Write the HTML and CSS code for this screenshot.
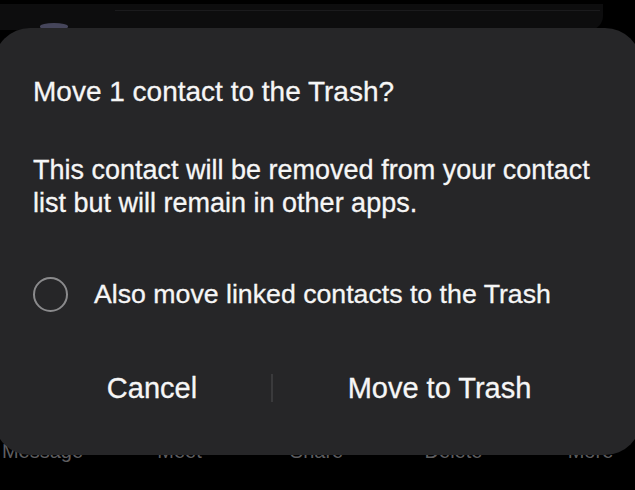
FILE: index.html
```html
<!DOCTYPE html>
<html lang="en">
<head>
<meta charset="utf-8">
<title>Move to Trash</title>
<link rel="stylesheet" href="styles.css">
</head>
<body>
<div class="app">
  <header class="topbar">
    <div class="topline"></div>
    <div class="avatar"></div>
  </header>
  <div class="spacer"></div>
  <nav class="bottomnav">
    <span>Message</span>
    <span>Meet</span>
    <span>Share</span>
    <span>Delete</span>
    <span>More</span>
  </nav>
</div>

<div class="dialog" role="dialog" aria-labelledby="dlg-title">
  <h1 class="title" id="dlg-title">Move 1 contact to the Trash?</h1>
  <p class="message">This contact will be removed from your contact list but will remain in other apps.</p>
  <label class="option">
    <span class="radio"></span>
    <span class="option-text">Also move linked contacts to the Trash</span>
  </label>
  <div class="actions">
    <button class="btn" type="button">Cancel</button>
    <span class="divider"></span>
    <button class="btn" type="button">Move to Trash</button>
  </div>
</div>
</body>
</html>
```

FILE: styles.css
```css
html, body {
  margin: 0;
  padding: 0;
  background: #000;
  width: 635px;
  height: 490px;
  overflow: hidden;
  font-family: "Liberation Sans", Arial, sans-serif;
}

.app {
  height: 490px;
  display: flex;
  flex-direction: column;
}

.topbar {
  margin-top: 4px;
  width: 603px;
  height: 26px;
  background: #0d0d0e;
  border-bottom-right-radius: 14px;
  display: flex;
  flex-direction: column;
}

.topline {
  margin: 6px 0 0 115px;
  width: 485px;
  height: 2px;
  background: #1b1b1d;
}

.avatar {
  margin: 13px 0 0 40px;
  width: 28px;
  height: 28px;
  border-radius: 50%;
  background: #45455a;
}

.spacer {
  flex: 1;
}

.bottomnav {
  display: grid;
  grid-template-columns: repeat(5, 137px);
  margin-left: -26px;
  margin-bottom: 27px;
  color: #5e5e60;
  font-size: 20px;
  text-align: center;
}

.dialog {
  position: absolute;
  top: 28px;
  left: -6px;
  width: 647px;
  height: 427px;
  box-sizing: border-box;
  background: #262628;
  border-radius: 36px;
  padding: 47px 35px 0 39px;
  color: #f6f6f6;
  -webkit-text-stroke: 0.3px #f6f6f6;
}

.title {
  margin: 0;
  font-size: 28px;
  line-height: 34px;
  font-weight: 400;
}

.message {
  margin: 45px 0 0;
  font-size: 27px;
  line-height: 33px;
}

.option {
  margin-top: 56px;
  height: 36px;
  display: flex;
  align-items: center;
  font-size: 26.7px;
}

.radio {
  width: 31px;
  height: 31px;
  border: 2.5px solid #8a8a8c;
  border-radius: 50%;
  margin-right: 26px;
  flex: none;
}

.actions {
  margin-top: 46px;
  height: 60px;
  display: grid;
  grid-template-columns: 238px 2px 1fr;
  align-items: center;
}

.btn {
  background: none;
  border: none;
  padding: 0;
  color: #f6f6f6;
  -webkit-text-stroke: 0.3px #f6f6f6;
  font-family: inherit;
  font-size: 29px;
  height: 60px;
}

.divider {
  width: 2px;
  height: 28px;
  background: #3a3a3c;
}
```
